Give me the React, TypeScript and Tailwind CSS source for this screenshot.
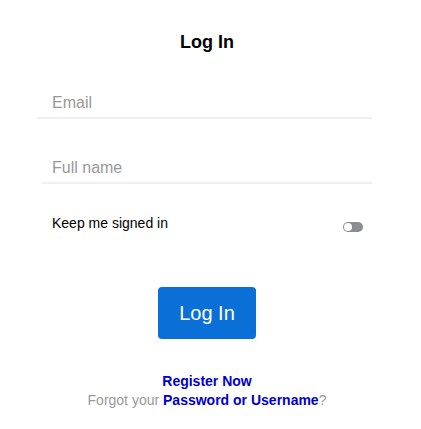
export default function App() {
  return (
    <div className="w-[414px] bg-white font-['Liberation_Sans',Arial,sans-serif]">
      <h1 className="pt-[31px] text-center text-[18px] font-bold leading-[22px] text-black">Log In</h1>

      {/* Inputs */}
      <div className="mt-[38px] pl-[37px] pr-[42px]">
        <div className="border-b-2 border-[#f0f0f0] pb-[2px] pl-[15px]">
          <input
            placeholder="Email"
            className="w-full bg-transparent text-[16px] leading-[20px] text-black outline-none placeholder:text-[#999]"
          />
        </div>
      </div>

      <div className="mt-[37px] pl-[42px] pr-[42px]">
        <div className="border-b-2 border-[#f0f0f0] pb-[2px] pl-[10px]">
          <input
            placeholder="Full name"
            className="w-full bg-transparent text-[16px] leading-[20px] text-black outline-none placeholder:text-[#999]"
          />
        </div>
      </div>

      <div className="mt-[30px] flex items-center justify-between pl-[52px] pr-[51px]">
        <span className="text-[14px] leading-[17px] text-black">Keep me signed in</span>
        <span className="mt-[8px] flex h-[10px] w-[20px] items-center rounded-full bg-[#8a8d93] px-[1px]">
          <span className="h-[8px] w-[8px] rounded-full bg-white" />
        </span>
      </div>

      <div className="mt-[55px] flex justify-center">
        <button className="h-[52px] w-[98px] rounded-[4px] bg-[#0a6fd6] text-[20px] text-white">Log In</button>
      </div>

      <div className="mt-[33px] text-center text-[14px] leading-[19px]">
        <div className="font-bold text-[#0000cc]">Register Now</div>
        <div className="text-[#999]">
          Forgot your <span className="font-bold text-[#0000cc]">Password or Username</span>?
        </div>
      </div>
      <div className="h-[20px]" />
    </div>
  )
}
